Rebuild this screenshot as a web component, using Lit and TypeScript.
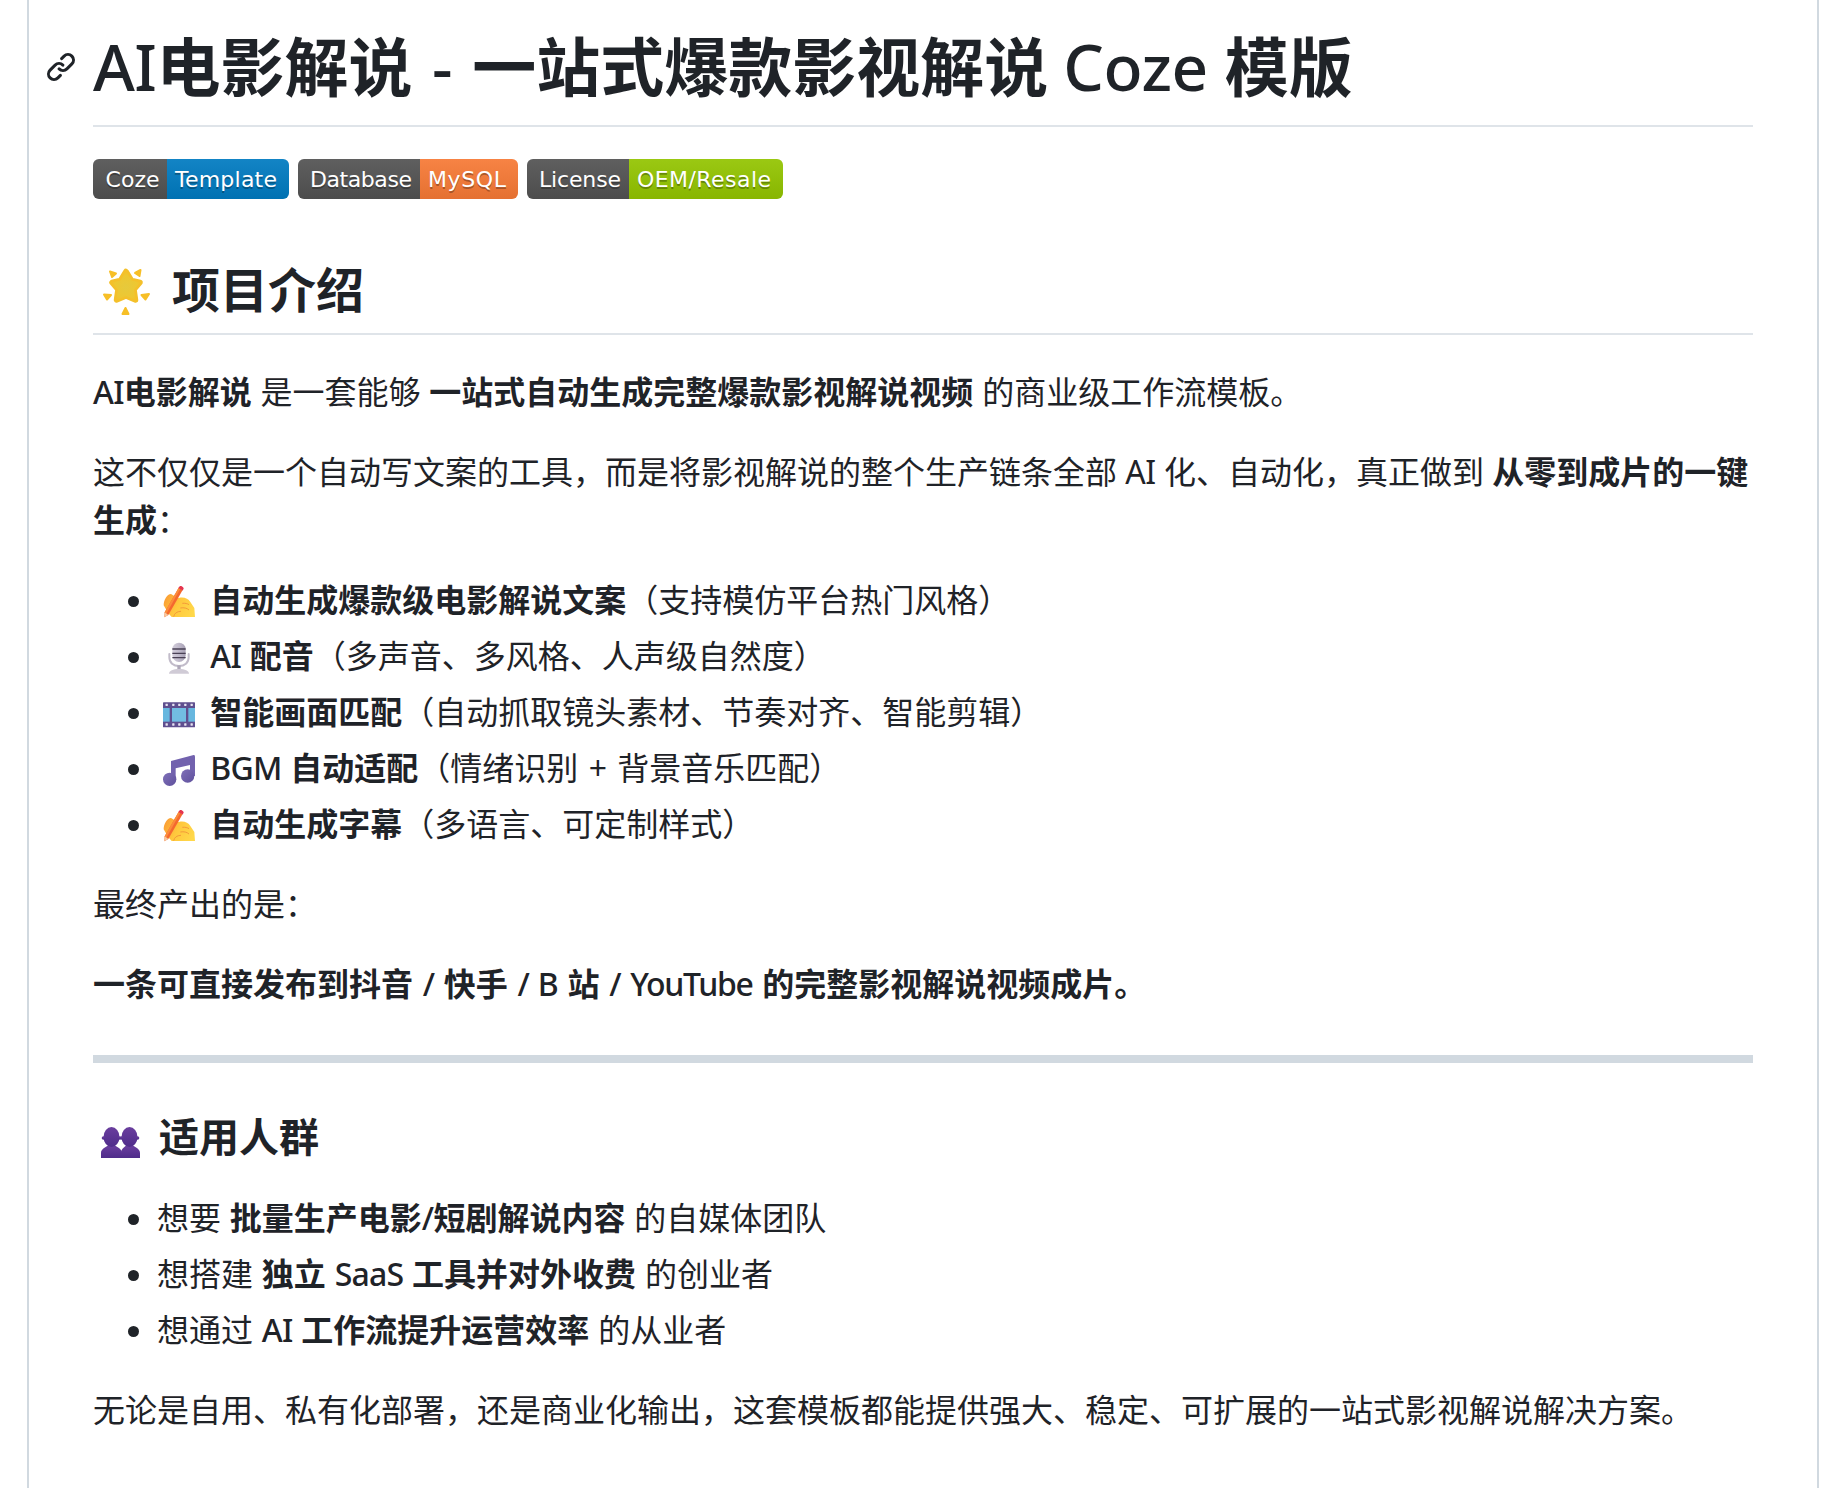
import { LitElement, html, css, svg } from "lit";
import { customElement } from "lit/decorators.js";

const starPts = "M24 3.500 29.500 12.500 38 14.500 32 21.500 33.500 32 24 28 14.500 32 16 21.500 10 14.500 18.500 12.500Z";
const star = svg`<defs><radialGradient id="st" cx=".5" cy=".55" r=".6"><stop offset="0" stop-color="#e6c93c"/><stop offset=".7" stop-color="#eec731"/><stop offset="1" stop-color="#f6bd28"/></radialGradient></defs>
<path d=${starPts} fill="#f4c02a" stroke="#f4c02a" stroke-width="5.500" stroke-linejoin="round"/>
<path d=${starPts} fill="url(#st)"/>
<g fill="#f7bf27" stroke="#f7bf27" stroke-width="2" stroke-linejoin="round"><path d="M8 3.500 14 5.500 10 9zM38.500 2 37.500 8 33 5zM2 26.500 9 27 5 31.500zM47 26 39.500 27 43.500 31.500zM23.500 40 26.500 46H20.500z"/></g>`;
const hand = svg`<defs><linearGradient id="hd" x1="0" y1=".3" x2="1" y2=".7"><stop offset="0" stop-color="#fb9f35"/><stop offset=".45" stop-color="#ffc83d"/><stop offset="1" stop-color="#ffd84a"/></linearGradient></defs>
<path d="M1 29C1 21 6 12 12 12L19 16 24 18C31 16 38 19 41 24L47 33 48 46.500H13L8 41Z" fill="url(#hd)"/>
<path d="M16 46c1-5 5-8 11-8M26 33c5-1 10 0 13 3M29 26c4-.5 8 .5 10 2" stroke="#f39a3a" stroke-width="1.500" fill="none"/>
<path d="M23.500 2.500 29.500 6 8 43.500 2 47 2.500 39.500Z" fill="#f4682f"/><path d="M23.500 2.500 26 4 5 41.500 2.500 39.500Z" fill="#fb8c3a"/><path d="M23 3 24.800.6C25.800-.2 27-.2 28.600.7S31 2.800 31 4L29.500 6.800Z" fill="#e5344f"/><path d="M2.500 39.500 8 43.500 2 47Z" fill="#f5c9a0"/>`;
const mic = svg`<defs><linearGradient id="mc" x1="0" x2="1"><stop offset="0" stop-color="#d3cedb"/><stop offset=".5" stop-color="#c0bacb"/><stop offset="1" stop-color="#a69fb3"/></linearGradient></defs>
<rect x="14" y="1" width="20" height="29" rx="10" fill="url(#mc)"/>
<path d="M14 10.500h20M14 17h20M14 23.500h20" stroke="#4a4155" stroke-width="2"/>
<path d="M9.500 18v5c0 8 6 13 14.500 13s14.500-5 14.500-13v-5" fill="none" stroke="#c2bcca" stroke-width="3" stroke-linecap="round"/>
<rect x="21.500" y="35" width="5" height="7" fill="#aea7b8"/><path d="M9 47.500c0-4 6-7 15-7s15 3 15 7z" fill="#d0cbd6"/>`;
const sx = [5.5, 15.5, 24.5, 33.5, 43];
const film = svg`<rect x="0" y="6.500" width="48" height="37.500" rx="1" fill="#5f4f8f"/><rect x="0" y="15" width="10" height="20.500" fill="#67b7df"/><rect x="13.500" y="15" width="21" height="20.500" fill="#72bde2"/><rect x="38" y="15" width="10" height="20.500" fill="#67b7df"/>
<g fill="#e6e2f0">${sx.map((x) => svg`<rect x=${x - 1.75} y="8.500" width="3.500" height="3.500" rx=".6"/><rect x=${x - 1.75} y="38" width="3.500" height="3.500" rx=".6"/>`)}</g>`;
const note = svg`<defs><linearGradient id="nt" x1="0" y1="0" x2="1" y2="1"><stop offset="0" stop-color="#7f70b8"/><stop offset="1" stop-color="#5f509c"/></linearGradient></defs>
<path d="M12 10.500 46 1.500Q48 1 48 4V33H40.500V16.500L19 21.500V38H12Z" fill="#7262ae"/><circle cx="10" cy="38" r="10" fill="url(#nt)"/><circle cx="37" cy="33" r="10" fill="url(#nt)"/>`;
const busts = svg`<defs><linearGradient id="bs" x1="0" y1="0" x2="0" y2="1"><stop offset="0" stop-color="#6a3e9e"/><stop offset="1" stop-color="#4f2c8a"/></linearGradient></defs>
<g fill="url(#bs)"><path d="M0 31V26C0 22 4 20.500 7 18.500H14C17 20.500 21 22 21 26V31Z"/><ellipse cx="10.500" cy="10" rx="8" ry="10"/><circle cx="2.500" cy="11" r="1.800"/><circle cx="18.500" cy="11" r="1.800"/><path d="M20 31V26C20 22 23 20.500 25 18.500H32C35 20.500 39 22 39 26V31Z"/><ellipse cx="28.500" cy="10" rx="8" ry="10"/><circle cx="20.500" cy="11" r="1.800"/><circle cx="36.500" cy="11" r="1.800"/></g>`;

const icon = (content: unknown, cls = "li-e", w = 32, h = 32, vb = "0 0 48 48") =>
  html`<svg class="emoji ${cls}" width=${w} height=${h} viewBox=${vb}>${content}</svg>`;

interface Seg { t: string; w: number; x: number; len: number; c: string }
const badge = (id: string, l: Seg, r: Seg) => {
  const total = l.w + r.w;
  const txt = (s: Seg, off: number) => svg`<text x=${off + s.x} y="30" textLength=${s.len} fill="#010101" fill-opacity=".3">${s.t}</text><text x=${off + s.x} y="28" textLength=${s.len} fill="#fff">${s.t}</text>`;
  return html`<svg class="badge" width=${total} height="40" viewBox="0 0 ${total} 40">
    <defs><linearGradient id="g${id}" x2="0" y2="100%"><stop offset="0" stop-color="#bbb" stop-opacity=".1"/><stop offset="1" stop-opacity=".1"/></linearGradient>
    <clipPath id="c${id}"><rect width=${total} height="40" rx="6"/></clipPath></defs>
    <g clip-path="url(#c${id})"><rect width=${l.w} height="40" fill=${l.c}/><rect x=${l.w} width=${r.w} height="40" fill=${r.c}/><rect width=${total} height="40" fill="url(#g${id})"/></g>
    ${txt(l, 0)}${txt(r, l.w)}
  </svg>`;
};

@customElement("app-root")
export class AppRoot extends LitElement {
  static styles = css`
    :host { display: block; background: #fff; height: 1488px; overflow: hidden; }
    .page {
      box-sizing: border-box; margin: 0 11px 0 27px; height: 1488px; border: solid #d1d9e0; border-width: 0 2px;
      padding: 0 64px; color: #1f2328; word-spacing: .5px;
      font: 32px/48px "Noto Sans", "Noto Sans CJK SC", sans-serif;
    }
    h1, h2, h3 { position: relative; margin: 0; font-weight: 700; }
    b { font-weight: 700; }
    .la { font-weight: 500; }
    b .la { letter-spacing: -.8px; }
    b .yt { letter-spacing: -1.3px; }
    .wide { word-spacing: 1.3px; }
    .tight { word-spacing: 0; }
    .ai { letter-spacing: -.5px; }
    .plus { margin: 0 1.5px; }
    .dash { margin: 0 2.5px; }
    h1 { font-size: 64px; line-height: 80px; padding: 26.8px 0 18.2px; border-bottom: 2px solid #dfe4e9; }
    h1 .ti { letter-spacing: -.6px; }
    h1 .co { letter-spacing: -.5px; margin-left: -2px; }
    h2 { font-size: 48px; line-height: 60px; padding: 1px 0 13.4px; border-bottom: 2px solid #dfe4e9; }
    h3 { font-size: 40px; line-height: 50px; padding-top: 1px; margin-bottom: 31px; }
    .anchor { position: absolute; left: -48px; top: 51px; width: 32px; height: 32px; color: #1f2328; }
    .anchor svg { display: block; }
    p { margin: 0 0 31px; padding-top: 1px; }
    p.badges { margin: 32px 0 48px; padding: 0; height: 51.6px; display: flex; gap: 9px; align-items: flex-start; }
    ul { margin: 0 0 31px; padding: 0 0 0 64px; }
    li { margin-top: 7px; padding-top: 1px; }
    li:first-child { margin-top: 0; }
    h2 + p { margin-top: 32px; }
    hr { height: 8px; border: 0; margin: 47px 0 48px; background: #d1d9e0; }
    .emoji { overflow: visible; }
    .li-e { margin: 0 7px 0 5.5px; vertical-align: -6px; }
    .h2-e { margin: 0 9px; vertical-align: -8px; }
    .h3-e { margin: 0 7.5px; vertical-align: -6px; }
    .badge { display: block; font: 22px "DejaVu Sans", Verdana, sans-serif; flex: none; }
  `;

  render() {
    return html`<div class="page">
      <h1><span class="anchor"><svg width="32" height="32" viewBox="0 0 16 16" fill="currentColor"><path d="m7.775 3.275 1.250-1.250a3.500 3.500 0 1 1 4.950 4.950l-2.500 2.500a3.500 3.500 0 0 1-4.950 0 .751.751 0 0 1 .018-1.042.751.751 0 0 1 1.042-.018 1.998 1.998 0 0 0 2.830 0l2.500-2.500a2.002 2.002 0 0 0-2.830-2.830l-1.250 1.250a.751.751 0 0 1-1.042-.018.751.751 0 0 1-.018-1.042Zm-4.690 9.640a1.998 1.998 0 0 0 2.830 0l1.250-1.250a.751.751 0 0 1 1.042.018.751.751 0 0 1 .018 1.042l-1.250 1.250a3.500 3.500 0 1 1-4.950-4.950l2.500-2.500a3.500 3.500 0 0 1 4.950 0 .751.751 0 0 1-.018 1.042.751.751 0 0 1-1.042.018 1.998 1.998 0 0 0-2.830 0l-2.500 2.500a1.998 1.998 0 0 0 0 2.830Z"/></svg></span><span class="la ti">AI</span>电影解说 <span class="la dash">-</span> 一站式爆款影视解说 <span class="la co">Coze</span> 模版</h1>
      <p class="badges">
        ${badge("a", { t: "Coze", w: 74, x: 12.5, len: 54, c: "#555" }, { t: "Template", w: 122, x: 8, len: 102, c: "#007ec6" })}
        ${badge("b", { t: "Database", w: 122, x: 12, len: 102, c: "#555" }, { t: "MySQL", w: 98, x: 8, len: 78, c: "#fe7d37" })}
        ${badge("c", { t: "License", w: 102, x: 12, len: 82, c: "#555" }, { t: "OEM/Resale", w: 154, x: 8, len: 134, c: "#97ca00" })}
      </p>
      <h2>${icon(star, "h2-e", 48, 48)} 项目介绍</h2>
      <p><b><span class="la">AI</span>电影解说</b> 是一套能够 <b>一站式自动生成完整爆款影视解说视频</b> 的商业级工作流模板。</p>
      <p class="tight">这不仅仅是一个自动写文案的工具，而是将影视解说的整个生产链条全部 <span class="ai">AI</span> 化、自动化，真正做到 <b>从零到成片的一键生成</b>：</p>
      <ul>
        <li>${icon(hand)} <b>自动生成爆款级电影解说文案</b>（支持模仿平台热门风格）</li>
        <li>${icon(mic)} <b><span class="la">AI</span> 配音</b>（多声音、多风格、人声级自然度）</li>
        <li>${icon(film)} <b>智能画面匹配</b>（自动抓取镜头素材、节奏对齐、智能剪辑）</li>
        <li>${icon(note)} <b><span class="la">BGM</span> 自动适配</b>（情绪识别 <span class="plus">+</span> 背景音乐匹配）</li>
        <li>${icon(hand)} <b>自动生成字幕</b>（多语言、可定制样式）</li>
      </ul>
      <p>最终产出的是：</p>
      <p class="wide"><b>一条可直接发布到抖音 <span class="la">/</span> 快手 <span class="la">/ B</span> 站 <span class="la">/</span> <span class="la yt">YouTube</span> 的完整影视解说视频成片。</b></p>
      <hr />
      <h3>${icon(busts, "h3-e", 40, 31, "0 0 40 31")} 适用人群</h3>
      <ul>
        <li>想要 <b>批量生产电影<span class="la">/</span>短剧解说内容</b> 的自媒体团队</li>
        <li>想搭建 <b>独立 <span class="la">SaaS</span> 工具并对外收费</b> 的创业者</li>
        <li>想通过 <b><span class="la">AI</span> 工作流提升运营效率</b> 的从业者</li>
      </ul>
      <p>无论是自用、私有化部署，还是商业化输出，这套模板都能提供强大、稳定、可扩展的一站式影视解说解决方案。</p>
    </div>`;
  }
}
